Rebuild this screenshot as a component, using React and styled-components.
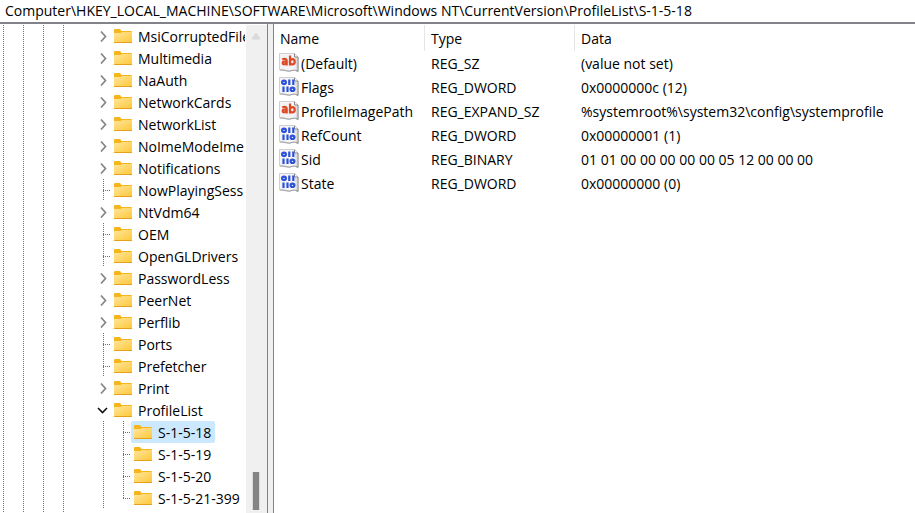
import React, { useState } from 'react';
import styled, { createGlobalStyle, css } from 'styled-components';

const dotsDown = 'repeating-linear-gradient(to bottom, #6e6e6e 0 1px, transparent 1px 2px)';
const dotsAcross = 'repeating-linear-gradient(to right, #6e6e6e 0 1px, transparent 1px 2px)';

const GlobalStyle = createGlobalStyle`
    * { box-sizing: border-box; }
    body {
        margin: 0;
        background: #fff;
        color: #000;
        font-family: "Segoe UI", "Open Sans", "Noto Sans", sans-serif;
        font-size: 14px;
    }
    button, input, table { font: inherit; color: inherit; }
`;

const Window = styled.div`
    display: flex;
    flex-direction: column;
    height: 100vh;
    overflow: hidden;
`;

const AddressBar = styled.input`
    flex: none;
    width: 100%;
    height: 24px;
    padding: 0 5px 2px;
    border: 0;
    border-bottom: 2px solid #828388;
    outline: none;
    background: #fff;
`;

const Panes = styled.div`
    display: flex;
    flex: 1;
    min-height: 0;
`;

const TreePane = styled.nav`
    display: flex;
    flex: none;
    width: 268px;
    padding-top: 1px;
    border-right: 1px solid #828388;
`;

const Tree = styled.ul`
    flex: 1;
    min-width: 0;
    margin: 0;
    padding: 0 0 0 93px;
    overflow: hidden;
    list-style: none;
    background-image: ${dotsDown}, ${dotsDown}, ${dotsDown}, ${dotsDown};
    background-size: 1px 100%;
    background-position: 3px 0, 23px 0, 43px 0, 63px 0;
    background-repeat: no-repeat;
`;

const Row = styled.li`
    display: flex;
    align-items: center;
    height: 22px;
    white-space: nowrap;
`;

/* a 20px cell with the dotted line that links a key to its parent */
const Guide = styled.span`
    flex: none;
    width: 20px;
    height: 22px;
    background-image: ${dotsDown}, ${p => (p.$branch ? dotsAcross : 'none')};
    background-size: 1px ${p => (p.$last ? '12px' : '100%')}, 8px 1px;
    background-position: 10px 0, 10px 11px;
    background-repeat: no-repeat;
`;

const Toggle = styled.button`
    display: flex;
    align-items: center;
    justify-content: center;
    width: 20px;
    height: 21px;
    padding: 0;
    border: 0;
    background: #fff;
`;

const Key = styled.button`
    display: flex;
    align-items: center;
    flex: none;
    gap: 6px;
    height: 22px;
    margin-left: -2px;
    padding: 0 4px 0 3px;
    border: 0;
    border-radius: 2px;
    background: transparent;
    ${p => p.$selected && css`
        background: #cce8ff;
    `}
`;

const ScrollBar = styled.div`
    display: flex;
    flex-direction: column;
    align-items: center;
    justify-content: space-between;
    flex: none;
    width: 21px;
    margin-left: 1px;
    padding: 7px 1px 3px 0;
    background: #f0f0f0;
`;

const Thumb = styled.div`
    width: 8px;
    height: 38px;
    border: solid #dcdcdc;
    border-width: 0 1px;
    background: #858585;
`;

const Splitter = styled.div`
    flex: none;
    width: 6px;
    border-right: 1px solid #828388;
    background: #f0f0f0;
`;

const ValuePane = styled.main`
    flex: 1;
    min-width: 0;
    padding-top: 1px;
    overflow: hidden;
`;

const Values = styled.table`
    width: 100%;
    border-collapse: separate;
    border-spacing: 0;
    table-layout: fixed;
    text-align: left;
    white-space: nowrap;

    td {
        height: 24px;
        padding: 0 0 0 6px;
    }
`;

const Heading = styled.th`
    width: ${p => p.$width || 'auto'};
    height: 26px;
    padding: 0 0 0 6px;
    border-right: ${p => (p.$width ? '1px solid #e5e5e5' : '0')};
    font-weight: 400;
`;

const Name = styled.td`
    && { padding-left: 5px; }

    div {
        display: flex;
        align-items: center;
        gap: 2px;
    }
`;

function Folder() {
    return (
        <svg width="18" height="16" viewBox="0 0 18 16" aria-hidden="true">
            <defs>
                <linearGradient id="folder" x1="0" y1="0" x2="1" y2="1">
                    <stop offset="0" stopColor="#ffe69c" />
                    <stop offset="1" stopColor="#ffc83c" />
                </linearGradient>
            </defs>
            <path d="M0 2a1 1 0 0 1 1-1h5l1.500 2H17a1 1 0 0 1 1 1v3H0z" fill="#f7b51c" />
            <path d="M0 5h6.500l1.500-1H18v10H0z" fill="url(#folder)" />
            <path d="M0 14h18v.4a.6.6 0 0 1-.6.6H.6a.6.6 0 0 1-.6-.6z" fill="#e5a11c" />
        </svg>
    );
}

function Chevron({ open }) {
    return open ? (
        <svg width="12" height="12" viewBox="0 0 12 12" aria-hidden="true">
            <path d="M1 4l4.500 4.500L10 4" fill="none" stroke="#111" strokeWidth="1.600" />
        </svg>
    ) : (
        <svg width="12" height="12" viewBox="0 0 12 12" aria-hidden="true">
            <path d="M4 1.500L8.500 6.500 4 11.500" fill="none" stroke="#858585" strokeWidth="1.700" />
        </svg>
    );
}

function ValueIcon({ text }) {
    return (
        <svg width="20" height="20" viewBox="0 0 20 20" aria-hidden="true">
            <path d="M.5.5h15l3.500 3.500v14.500q-3-2.500-6-.8t-6-.2-6.500-.7z" fill="#f4f4f6" stroke="#d0d0d3" />
            <path d="M15.500.5V4H19v14.500l-2-1.200" fill="#dededf" stroke="#8c8c90" />
            <path d="M1 17q3 0 6 .8t6-.4 6 1.100" fill="none" stroke="#a3a3a6" />
            {text ? (
                <g fill="none" stroke="#de4a25" strokeWidth="2.200">
                    <path d="M3.200 6.300Q7.700 4.800 7.700 7.800v4.700M7.700 8.600H5a1.300 1.300 0 0 0 0 2.700Q7 11.300 7.700 9.800" />
                    <path d="M11 2.500v10" />
                    <ellipse cx="13.300" cy="8.800" rx="2.400" ry="2.600" />
                </g>
            ) : (
                <g fill="none" stroke="#2c50d8" strokeWidth="2.200">
                    <ellipse cx="5" cy="5.300" rx="1.900" ry="1.700" />
                    <path d="M10.300 2.500v5.500M14.300 2.500v5.500M4.500 9.500V15M8.500 9.500V15" />
                    <ellipse cx="13.500" cy="12.300" rx="1.900" ry="1.700" />
                </g>
            )}
        </svg>
    );
}

const keys = [
    { name: 'MsiCorruptedFile', children: true },
    { name: 'Multimedia', children: true },
    { name: 'NaAuth', children: true },
    { name: 'NetworkCards', children: true },
    { name: 'NetworkList', children: true },
    { name: 'NoImeModeIme', children: true },
    { name: 'Notifications', children: true },
    { name: 'NowPlayingSess' },
    { name: 'NtVdm64', children: true },
    { name: 'OEM' },
    { name: 'OpenGLDrivers' },
    { name: 'PasswordLess', children: true },
    { name: 'PeerNet', children: true },
    { name: 'Perflib', children: true },
    { name: 'Ports' },
    { name: 'Prefetcher' },
    { name: 'Print', children: true },
    { name: 'ProfileList', children: true, open: true },
];

const profiles = ['S-1-5-18', 'S-1-5-19', 'S-1-5-20', 'S-1-5-21-399'];

const values = [
    { name: '(Default)', type: 'REG_SZ', data: '(value not set)', text: true },
    { name: 'Flags', type: 'REG_DWORD', data: '0x0000000c (12)' },
    { name: 'ProfileImagePath', type: 'REG_EXPAND_SZ', data: '%systemroot%\\system32\\config\\systemprofile', text: true },
    { name: 'RefCount', type: 'REG_DWORD', data: '0x00000001 (1)' },
    { name: 'Sid', type: 'REG_BINARY', data: '01 01 00 00 00 00 00 05 12 00 00 00' },
    { name: 'State', type: 'REG_DWORD', data: '0x00000000 (0)' },
];

function App() {
    const [selected, setSelected] = useState('S-1-5-18');

    return (
        <Window>
            <GlobalStyle />
            <AddressBar
                aria-label="Address"
                defaultValue="Computer\HKEY_LOCAL_MACHINE\SOFTWARE\Microsoft\Windows NT\CurrentVersion\ProfileList\S-1-5-18"
            />
            <Panes>
                <TreePane aria-label="Registry keys">
                    <Tree>
                        {keys.map(key => (
                            <Row key={key.name}>
                                <Guide $branch>
                                    {key.children && (
                                        <Toggle aria-label={key.name} aria-expanded={!!key.open}>
                                            <Chevron open={key.open} />
                                        </Toggle>
                                    )}
                                </Guide>
                                <Key $selected={selected === key.name} onClick={() => setSelected(key.name)}>
                                    <Folder />
                                    {key.name}
                                </Key>
                            </Row>
                        ))}
                        {profiles.map((name, i) => (
                            <Row key={name}>
                                <Guide />
                                <Guide $branch $last={i === profiles.length - 1} />
                                <Key $selected={selected === name} onClick={() => setSelected(name)}>
                                    <Folder />
                                    {name}
                                </Key>
                            </Row>
                        ))}
                    </Tree>
                    <ScrollBar>
                        <svg width="10" height="8" viewBox="0 0 10 8" aria-hidden="true">
                            <path d="M5 1l4 6H1z" fill="#dadada" stroke="#dadada" strokeLinejoin="round" />
                        </svg>
                        <Thumb />
                    </ScrollBar>
                </TreePane>
                <Splitter />
                <ValuePane>
                    <Values>
                        <thead>
                            <tr>
                                <Heading $width="151px">Name</Heading>
                                <Heading $width="150px">Type</Heading>
                                <Heading>Data</Heading>
                            </tr>
                        </thead>
                        <tbody>
                            {values.map(value => (
                                <tr key={value.name}>
                                    <Name>
                                        <div>
                                            <ValueIcon text={value.text} />
                                            {value.name}
                                        </div>
                                    </Name>
                                    <td>{value.type}</td>
                                    <td>{value.data}</td>
                                </tr>
                            ))}
                        </tbody>
                    </Values>
                </ValuePane>
            </Panes>
        </Window>
    );
}

export default App;
